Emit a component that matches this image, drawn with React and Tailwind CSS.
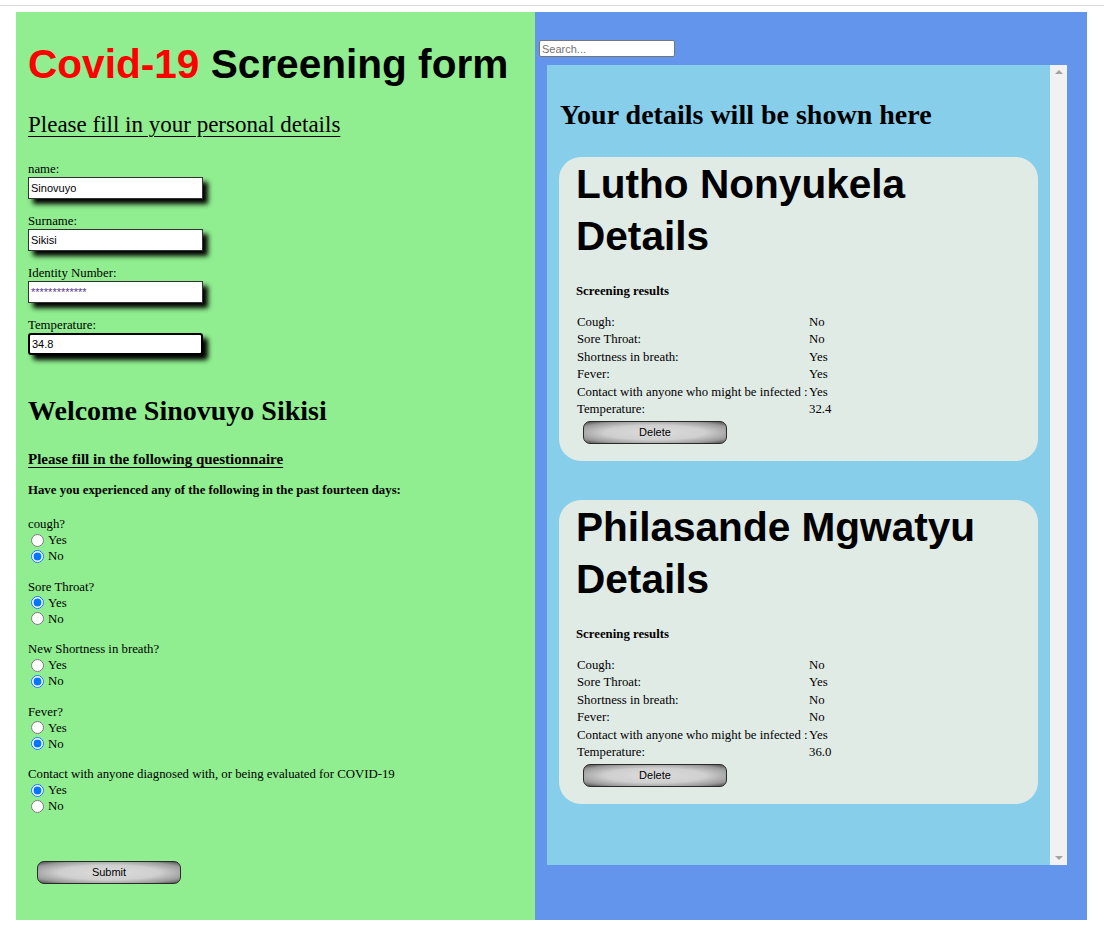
import React from "react";

const serif = "font-['Liberation_Serif','Times_New_Roman',serif]";
const sans = "font-['Liberation_Sans',Arial,sans-serif]";

const fields = [
  { label: "name:", value: "Sinovuyo" },
  { label: "Surname:", value: "Sikisi" },
  { label: "Identity Number:", value: "*************", secret: true },
  { label: "Temperature:", value: "34.8", focused: true },
];

const questions = [
  { name: "cough", label: "cough?", answer: "No" },
  { name: "sore", label: "Sore Throat?", answer: "Yes" },
  { name: "breath", label: "New Shortness in breath?", answer: "No" },
  { name: "fever", label: "Fever?", answer: "No" },
  { name: "contact", label: "Contact with anyone diagnosed with, or being evaluated for COVID-19", answer: "Yes" },
];

const people = [
  {
    name: "Lutho Nonyukela",
    cough: "No",
    sore: "No",
    breath: "Yes",
    fever: "Yes",
    contact: "Yes",
    temp: "32.4",
  },
  {
    name: "Philasande Mgwatyu",
    cough: "No",
    sore: "Yes",
    breath: "No",
    fever: "No",
    contact: "Yes",
    temp: "36.0",
  },
];

function GrayButton({ children, className = "" }) {
  return (
    <button
      type="button"
      className={`${sans} h-[23px] w-[144px] rounded-[7px] border border-[#2a2a2a] bg-[radial-gradient(ellipse_at_center,#dcdcdc_0%,#cfcfcf_50%,#9a9a9a_80%,#4a4a4a_100%)] text-[11px] text-black ${className}`}
    >
      {children}
    </button>
  );
}

function Field({ label, value, secret, focused }) {
  return (
    <div className="mb-[15px]">
      <div className="text-[12.8px] leading-[15px]">{label}</div>
      <input
        type="text"
        defaultValue={value}
        readOnly
        className={`${sans} block h-[22px] w-[175px] bg-white px-[2px] text-[11px] shadow-[5px_5px_5px_#000] outline-none ${
          focused ? "rounded-[3px] border-2 border-black" : "border border-[#333]"
        } ${secret ? "text-[#5a3a8a]" : "text-black"}`}
      />
    </div>
  );
}

function Question({ name, label, answer }) {
  return (
    <div className="mb-[14.5px] text-[12.8px] leading-[16px]">
      <div>{label}</div>
      {["Yes", "No"].map((opt) => (
        <label key={opt} className="flex h-[16px] items-center">
          <input
            type="radio"
            name={name}
            defaultChecked={answer === opt}
            className="m-0 ml-[3px] mr-[4px] h-[13px] w-[13px]"
          />
          <span>{opt}</span>
        </label>
      ))}
    </div>
  );
}

function PersonCard({ p, className = "" }) {
  const rows = [
    ["Cough:", p.cough],
    ["Sore Throat:", p.sore],
    ["Shortness in breath:", p.breath],
    ["Fever:", p.fever],
    ["Contact with anyone who might be infected :", p.contact],
    ["Temperature:", p.temp],
  ];
  return (
    <div className={`ml-[12px] h-[304px] w-[479px] rounded-[22px] bg-[#e1ebe6] pl-[17px] pt-[1px] ${className}`}>
      <h2 className={`${sans} w-[440px] text-[40.6px] font-bold leading-[52px] text-black`}>{p.name} Details</h2>
      <div className="mt-[22px] text-[12.8px] font-bold leading-[15px]">Screening results</div>
      <div className="mt-[14.5px] grid grid-cols-[233px_auto] whitespace-nowrap text-[12.8px] leading-[17.6px]">
        {rows.map(([k, v]) => (
          <React.Fragment key={k}>
            <div className="pl-[1px]">{k}</div>
            <div>{v}</div>
          </React.Fragment>
        ))}
      </div>
      <GrayButton className="ml-[7px] mt-[2px]">Delete</GrayButton>
    </div>
  );
}

export default function App() {
  return (
    <div className={`${serif} min-h-[928px] w-[1104px] bg-white text-black`}>
      <div className="h-[5px]" />
      <div className="border-t border-[#dcdcdc] pt-[6px]">
        <div className="ml-[16px] flex h-[908px] w-[1071px]">
          {/* form side */}
          <div className="w-[519px] bg-[#90ee90] pl-[12px]">
            <h1 className={`${sans} mt-[29px] text-[40.6px] font-bold leading-[46px]`}>
              <span className="text-[#ff0000]">Covid-19</span> Screening form
            </h1>
            <h2 className="mt-[24px] text-[23px] leading-[28px] underline decoration-1 underline-offset-[4px]">
              Please fill in your personal details
            </h2>
            <div className="mt-[23px]">
              {fields.map((f) => (
                <Field key={f.label} {...f} />
              ))}
            </div>
            <h2 className="mt-[40px] text-[28px] font-bold leading-[32px]">Welcome Sinovuyo Sikisi</h2>
            <div className="mt-[23px] text-[15px] font-bold leading-[18px] underline underline-offset-[3px]">
              Please fill in the following questionnaire
            </div>
            <div className="mt-[15px] text-[12.8px] font-bold leading-[15px]">
              Have you experienced any of the following in the past fourteen days:
            </div>
            <div className="mt-[18px]">
              {questions.map((q) => (
                <Question key={q.name} {...q} />
              ))}
            </div>
            <GrayButton className="ml-[9px] mt-[32px] w-[143px]">Submit</GrayButton>
          </div>

          {/* results side */}
          <div className="w-[552px] bg-[#6495ed] pl-[4px]">
            <input
              type="text"
              placeholder="Search..."
              className={`${sans} mt-[28px] block h-[17px] w-[136px] rounded-[2px] border border-[#767676] bg-white px-[2px] text-[11px] outline-none placeholder:text-[#757575]`}
            />
            <div className="ml-[8px] mt-[8px] flex h-[800px] w-[520px] bg-[#87ceeb]">
              <div className="w-[503px]">
                <h2 className="pl-[13px] pt-[34px] text-[28px] font-bold leading-[32px]">
                  Your details will be shown here
                </h2>
                <PersonCard p={people[0]} className="mt-[26px]" />
                <PersonCard p={people[1]} className="mt-[39px]" />
              </div>
              {/* scrollbar */}
              <div className="flex w-[17px] flex-col items-center justify-between bg-[#f1f1f1] py-[5px]">
                <div className="h-0 w-0 border-x-[4px] border-b-[4px] border-x-transparent border-b-[#a3a3a3]" />
                <div className="h-0 w-0 border-x-[4px] border-t-[4px] border-x-transparent border-t-[#a3a3a3]" />
              </div>
            </div>
          </div>
        </div>
      </div>
    </div>
  );
}
